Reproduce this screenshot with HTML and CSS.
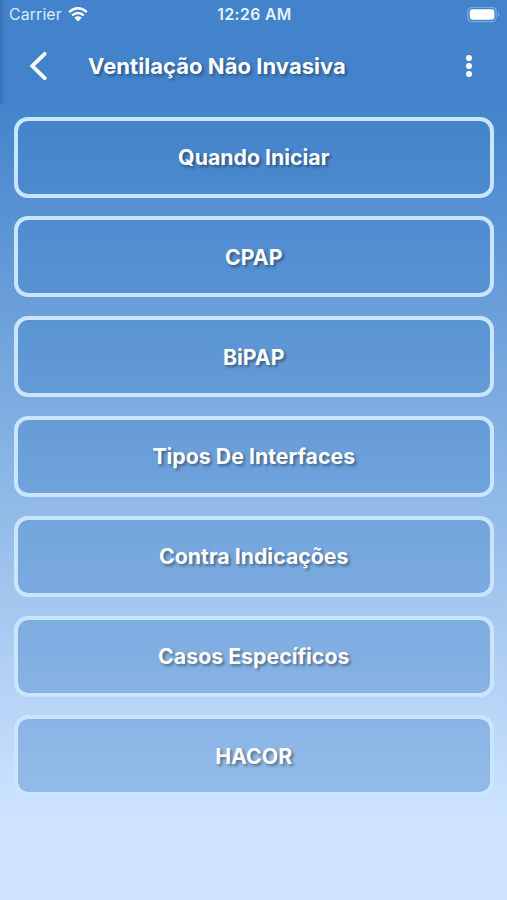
FILE: index.html
```html
<!DOCTYPE html>
<html lang="pt-BR">
	<head>
		<meta charset="UTF-8">
		<title>Ventilação Não Invasiva</title>
		<link rel="stylesheet" href="styles.css">
	</head>

	<body>
		<div class="screen">
			<div class="status">
				<div class="carrier">
					<span>Carrier</span>
					<svg class="wifi" width="20" height="15" viewBox="0 0 20 15">
						<path d="M1.2 5.1Q10 -2.5 18.8 5.1M4.2 8.4Q10 3.6 15.8 8.4" fill="none" stroke="#fff" stroke-width="2.5"/>
						<path d="M6.3 10.7Q10 7.9 13.7 10.7L10 14.6Z" fill="#fff"/>
					</svg>
				</div>
				<div class="time">12:26 AM</div>
				<svg class="battery" width="33" height="16" viewBox="0 0 33 16">
					<rect x="0.8" y="0.3" width="28.4" height="14.4" rx="4" fill="none" stroke="#8db5e4" stroke-width="1"/>
					<rect x="2.8" y="2.3" width="24.6" height="10.4" rx="2.4" fill="#fff"/>
					<path d="M31 5.1Q33 7.5 31 9.9Z" fill="#8db5e4"/>
				</svg>
			</div>
			<div class="bar">
				<svg class="back" width="20" height="30" viewBox="0 0 20 30">
					<path d="M15.7 2.8L3.3 15L15.7 27.2" fill="none" stroke="#fff" stroke-width="3.8" stroke-linecap="round"/>
				</svg>
				<h1>Ventilação Não Invasiva</h1>
				<svg class="more" width="8" height="24" viewBox="0 0 8 24">
					<circle cx="4" cy="4" r="3" fill="#fff"/>
					<circle cx="4" cy="12" r="3" fill="#fff"/>
					<circle cx="4" cy="20" r="3" fill="#fff"/>
				</svg>
			</div>
			<ul class="menu">
				<li><a href="#">Quando Iniciar</a></li>
				<li><a href="#">CPAP</a></li>
				<li><a href="#">BiPAP</a></li>
				<li><a href="#">Tipos De Interfaces</a></li>
				<li><a href="#">Contra Indicações</a></li>
				<li><a href="#">Casos Específicos</a></li>
				<li><a href="#">HACOR</a></li>
			</ul>
		</div>
	</body>

</html>
```
FILE: styles.css
```css
body,
ul,
h1 {
	margin: 0;
	padding: 0;
}

li {
	list-style: none;
}

a {
	color: #fff;
	text-decoration: none;
}

body {
	font-family: Inter, "Liberation Sans", sans-serif;
	color: #fff;
}

.screen {
	box-sizing: border-box;
	height: 900px;
	overflow: hidden;
	background: linear-gradient(to right, rgba(30, 70, 120, 0.3), rgba(30, 70, 120, 0) 5px) 0 0 / 100% 104px no-repeat,
		linear-gradient(#4283cb 100px, #cfe5ff 825px);
}

/* status bar */
.status {
	display: grid;
	grid-template-columns: 1fr auto 1fr;
	align-items: center;
	height: 29px;
	padding: 0 7px 0 9px;
}

.carrier {
	display: flex;
	align-items: center;
	gap: 6px;
	font-size: 15.8px;
	letter-spacing: 0.15px;
	color: #dcebfa;
}

.time {
	font-size: 15.7px;
	font-weight: 600;
	letter-spacing: 0.4px;
	color: #e6f3ff;
}

.battery {
	justify-self: end;
}

/* title bar */
.bar {
	display: flex;
	align-items: center;
	height: 73px;
	padding: 0 34px 0 29px;
}

.bar h1 {
	flex: 1;
	margin-left: 39px;
	font-size: 22px;
	font-weight: 700;
	letter-spacing: 0.05px;
	text-shadow: 2px 2px 3px rgba(0, 0, 0, 0.35);
}

/* menu */
.menu {
	display: flex;
	flex-direction: column;
	gap: 18.8px;
	padding: 14.6px 13.5px 0 14px;
}

.menu a {
	display: flex;
	align-items: center;
	justify-content: center;
	box-sizing: border-box;
	height: 81px;
	border: 4px solid #c9e5ff;
	border-radius: 14px;
	background: rgba(66, 131, 203, 0.4) padding-box;
	font-size: 21.3px;
	font-weight: 700;
	text-shadow: 2px 2px 3px rgba(0, 0, 0, 0.4);
}
```
